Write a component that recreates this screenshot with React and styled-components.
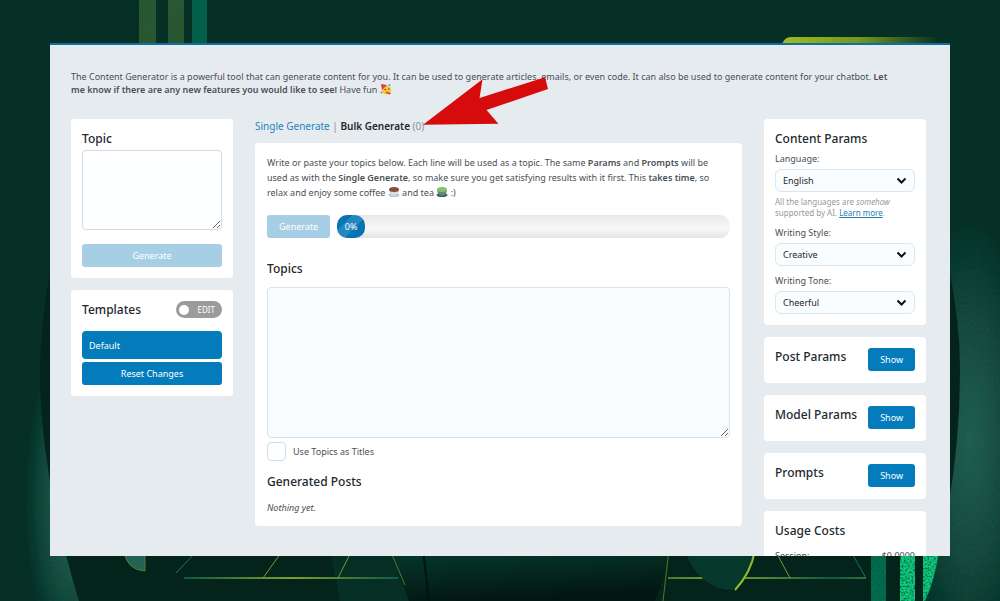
import React, { useState } from 'react'
import styled, { createGlobalStyle } from 'styled-components'

const GlobalStyle = createGlobalStyle`
  * {
    box-sizing: border-box;
  }
  body {
    margin: 0;
    background: #062f26;
    color: #4a4f55;
    font-family: 'Noto Sans', 'Open Sans', sans-serif;
    font-size: 9px;
  }
  button,
  select,
  textarea,
  input {
    font-family: inherit;
    font-size: inherit;
  }
`

//#region  styled components
const StyledPage = styled('div')`
  position: relative;
  height: 100vh;
  padding: 43px 50px 45px;
  overflow: hidden;
`
const StyledBackdrop = styled('svg')`
  position: absolute;
  top: 0;
  left: 0;
  width: 100%;
  height: 100%;
`
const StyledWindow = styled('main')`
  position: relative;
  height: 100%;
  padding: 25px 24px 0 21px;
  overflow: hidden;
  background: #e6ebf0;
  border-top: 2px solid #146d9f;
`
const StyledIntro = styled('p')`
  margin: 0 0 23px;
  padding-right: 30px;
  line-height: 13px;
  b {
    font-weight: 600;
  }
`
const StyledColumns = styled('div')`
  display: grid;
  grid-template-columns: 162px 1fr 162px;
  gap: 22px;
  align-items: start;
`
const StyledColumn = styled('div')`
  display: flex;
  flex-direction: column;
  gap: 12px;
  min-width: 0;
`
const StyledPanel = styled('section')`
  padding: 11px;
  background: #fff;
  border-radius: 4px;
`
const StyledCollapsedPanel = styled(StyledPanel)`
  padding-bottom: 12px;
`
const StyledTitle = styled('h2')`
  display: block;
  margin: 0;
  color: #23282d;
  font-size: 12px;
  font-weight: 500;
  line-height: 18px;
`
const StyledTopicInput = styled('textarea')`
  display: block;
  width: 100%;
  height: 80px;
  margin: 2px 0 14px;
  background: #fdfeff;
  border: 1px solid #d5dde3;
  border-radius: 4px;
`
const StyledButton = styled('button')`
  display: block;
  width: ${props => (props.$wide ? '100%' : 'auto')};
  height: 23px;
  padding: 0 12px;
  background: #047cbc;
  border: 0;
  border-radius: 3px;
  color: #fff;
  :hover {
    cursor: pointer;
  }
  &:disabled {
    background: #a6cfe5;
  }
`
const StyledHead = styled('div')`
  display: flex;
  justify-content: space-between;
  align-items: flex-start;
`
const StyledSwitch = styled('label')`
  display: flex;
  align-items: center;
  justify-content: space-between;
  width: 46px;
  height: 17px;
  padding: 0 7px 0 3px;
  background: #9b9b9b;
  border-radius: 9px;
  color: #fff;
  font-size: 8px;
  input {
    appearance: none;
    width: 10px;
    height: 10px;
    margin: 0;
    background: #fff;
    border-radius: 50%;
  }
`
const StyledTemplate = styled('button')`
  display: block;
  width: 100%;
  height: 28px;
  margin: 12px 0 3px;
  padding: 0 7px;
  background: #047cbc;
  border: 0;
  border-radius: 4px;
  color: #fff;
  text-align: left;
`
const StyledModes = styled('nav')`
  height: 12px;
  font-size: 10px;
  line-height: 14px;
  color: #8d9297;
  a {
    color: #2583bf;
    text-decoration: none;
  }
  b {
    color: #23282d;
    font-weight: 600;
  }
`
const StyledMainPanel = styled(StyledPanel)`
  padding: 12px 12px 11px;
`
const StyledHelp = styled('p')`
  margin: 0 0 15px;
  padding-right: 12px;
  line-height: 15px;
  b {
    font-weight: 600;
  }
`
const StyledRunRow = styled('div')`
  display: flex;
  gap: 7px;
  margin-bottom: 22px;
`
const StyledTrack = styled('div')`
  flex: 1;
  height: 23px;
  background: linear-gradient(#e9e9e9, #f7f7f7 60%, #e4e4e4);
  border-radius: 10px;
`
const StyledProgress = styled('div')`
  width: 28px;
  height: 23px;
  background: linear-gradient(135deg, #0674b0 30%, #2488c0 30%, #2488c0 60%, #0674b0 60%);
  border-radius: 10px;
  color: #fff;
  line-height: 23px;
  text-align: center;
`
const StyledTopics = styled('textarea')`
  display: block;
  width: 100%;
  height: 151px;
  margin: 9px 0 4px;
  background: #f9fcff;
  border: 1px solid #d3e5ee;
  border-radius: 4px;
`
const StyledCheck = styled('label')`
  display: flex;
  align-items: center;
  gap: 7px;
  margin-bottom: 12px;
  input {
    appearance: none;
    width: 19px;
    height: 19px;
    margin: 0;
    background: #fff;
    border: 1px solid #c9dfeb;
    border-radius: 4px;
  }
`
const StyledEmpty = styled('p')`
  margin: 10px 0 0;
  font-style: italic;
  line-height: 14px;
`
const StyledField = styled('div')`
  margin-top: 7px;
  h2 + & {
    margin-top: 3px;
  }
  label {
    display: block;
    margin-bottom: 3px;
    line-height: 15px;
  }
`
const StyledSelectWrapper = styled('div')`
  position: relative;
  svg {
    position: absolute;
    top: 8px;
    right: 8px;
    pointer-events: none;
  }
`
const StyledSelect = styled('select')`
  appearance: none;
  display: block;
  width: 100%;
  height: 23px;
  padding: 0 7px;
  background: #f9fdff;
  border: 1px solid #d6e8f0;
  border-radius: 6px;
  color: #23282d;
`
const StyledHint = styled('p')`
  margin: 4px 0 0;
  padding-right: 12px;
  color: #999;
  font-size: 8px;
  line-height: 11px;
  a {
    color: #2b7cb3;
  }
`
const StyledCost = styled('div')`
  display: flex;
  justify-content: space-between;
  margin-top: 8px;
  line-height: 15px;
`
const StyledEmoji = styled('svg')`
  width: 12px;
  height: 12px;
  vertical-align: -2px;
`
const StyledArrow = styled('svg')`
  position: absolute;
  top: 32px;
  left: 373px;
  width: 125px;
  height: 50px;
  pointer-events: none;
`
//#endregion

const Backdrop = () => (
  <StyledBackdrop viewBox="0 0 1000 601" preserveAspectRatio="none" aria-hidden="true">
    <defs>
      <filter id="grain" x="0" y="0" width="100%" height="100%">
        <feTurbulence type="fractalNoise" baseFrequency="0.5" numOctaves="2" seed="4" />
        <feColorMatrix values="0 0 0 0 0  0 0 0 0 0.12  0 0 0 0 0.09  0 3 0 0 -1.25" />
        <feComposite in2="SourceGraphic" operator="in" result="dots" />
        <feMerge>
          <feMergeNode in="SourceGraphic" />
          <feMergeNode in="dots" />
        </feMerge>
      </filter>
      <radialGradient id="sideLeft" gradientUnits="userSpaceOnUse" cx="75" cy="500" r="170" gradientTransform="translate(52 0) scale(0.3 1)">
        <stop offset="0" stopColor="#2d6a58" />
        <stop offset="1" stopColor="#2d6a58" stopOpacity="0" />
      </radialGradient>
      <radialGradient id="sideRight" gradientUnits="userSpaceOnUse" cx="970" cy="440" r="230" gradientTransform="translate(679 0) scale(0.3 1)">
        <stop offset="0" stopColor="#2a5d4e" />
        <stop offset="1" stopColor="#2a5d4e" stopOpacity="0" />
      </radialGradient>
      <linearGradient id="lime">
        <stop offset="0" stopColor="#9fbd1f" />
        <stop offset="0.5" stopColor="#6f961f" />
        <stop offset="1" stopColor="#062f26" />
      </linearGradient>
      <linearGradient id="body" x1="0" y1="0" x2="0.3" y2="1">
        <stop offset="0" stopColor="#063a2c" />
        <stop offset="1" stopColor="#021712" />
      </linearGradient>
      <linearGradient id="line" gradientUnits="userSpaceOnUse" x1="184" x2="400" y1="0" y2="0" spreadMethod="repeat">
        <stop offset="0" stopColor="#0f5a43" />
        <stop offset="0.5" stopColor="#7f9f2a" />
        <stop offset="1" stopColor="#0f5a43" />
      </linearGradient>
    </defs>
    <rect width="1000" height="601" fill="#062f26" />
    <g filter="url(#grain)">
      <rect x="139" width="17" height="50" fill="#35521d" />
      <rect x="168" width="16" height="50" fill="#35521d" />
      <rect x="192" width="15" height="50" fill="#0b5e45" />
      <rect y="280" width="140" height="321" fill="url(#sideLeft)" />
      <rect x="880" y="200" width="120" height="401" fill="url(#sideRight)" />
    </g>
    <path d="M782 45 Q784 37 791 37 H940 V45 Z" fill="url(#lime)" />
    <path d="M50 270 Q40 330 40 380 Q42 480 79 601 H925 Q960 490 960 370 Q960 320 948 264 Z" fill="#03231b" />
    <path d="M330 550 H404 L410 601 H340 Z" fill="#052e24" />
    <path d="M390 550 L409 601 H655 Q665 580 668 550 Z" fill="url(#body)" />
    <path d="M423 550 L429 601" stroke="#01140f" strokeWidth="2" />
    <path d="M124 550 Q126 570 145 571 V550 Z" fill="#246352" stroke="#52783a" />
    <g fill="none" stroke="#14795a">
      <path d="M184 578 H398 M668 578 H866" stroke="url(#line)" strokeWidth="2" />
      <path d="M198 550 L176 573 M850 550 L866 578" />
      <path d="M283 550 L263 578 M352 550 L338 578 M776 552 L790 578" stroke="#759b32" />
      <path d="M390 550 L405 585 M669 550 L663 601" stroke="#55762b" />
    </g>
    <path d="M684 550 Q700 590 733 590 Q751 576 756 550 Z" fill="#07382c" />
    <path d="M735 590 Q751 573 755 550" fill="none" stroke="#94bb2b" strokeWidth="2" />
    <g filter="url(#grain)">
      <path d="M871 550 H886 V601 H871 Z" fill="#0a6c48" />
      <path d="M900 550 H915 V601 H900 Z M923 550 H939 Q935 580 925 601 H923 Z" fill="#12c877" />
    </g>
  </StyledBackdrop>
)

const PartyFace = () => (
  <StyledEmoji viewBox="0 0 24 24" role="img" aria-label="party face">
    <circle cx="13" cy="14" r="9" fill="#fcc531" />
    <path d="M2 2 L14 4 L4 14 Z" fill="#dd3d4c" />
    <path d="M9 13 h3 M16 12 h3" stroke="#5b3b1a" strokeWidth="2" />
    <path d="M12 17 L22 20 L20 23 L12 20 Z" fill="#d5452f" />
    <circle cx="19" cy="4" r="2" fill="#45a3dc" />
    <circle cx="3" cy="19" r="2" fill="#65b247" />
  </StyledEmoji>
)

const Cup = ({ drink, bowl, rim, label }) => (
  <StyledEmoji viewBox="0 0 24 24" role="img" aria-label={label}>
    <ellipse cx="12" cy="18" rx="11" ry="4" fill={bowl} />
    <path d="M2 7 H22 Q21 20 12 20 Q3 20 2 7 Z" fill={rim} />
    <ellipse cx="12" cy="7" rx="10" ry="5" fill={drink} />
  </StyledEmoji>
)

const SelectField = ({ id, label, options, children }) => (
  <StyledField>
    <label htmlFor={id}>{label}:</label>
    <StyledSelectWrapper>
      <StyledSelect id={id}>
        {options.map(option => (
          <option key={option}>{option}</option>
        ))}
      </StyledSelect>
      <svg width="11" height="8" viewBox="0 0 11 8" fill="none">
        <path d="M1.500 1.500 L5.500 5.500 L9.500 1.500" stroke="#111" strokeWidth="2" />
      </svg>
    </StyledSelectWrapper>
    {children}
  </StyledField>
)

const CollapsedPanel = ({ title }) => (
  <StyledCollapsedPanel>
    <StyledHead>
      <StyledTitle>{title}</StyledTitle>
      <StyledButton>Show</StyledButton>
    </StyledHead>
  </StyledCollapsedPanel>
)

const App = () => {
  const [topics, setTopics] = useState('')
  const [progress] = useState(0)
  return (
    <StyledPage>
      <GlobalStyle />
      <Backdrop />
      <StyledWindow>
        <StyledIntro>
          The Content Generator is a powerful tool that can generate content for you. It can be used
          to generate articles, emails, or even code. It can also be used to generate content for
          your chatbot. <b>Let me know if there are any new features you would like to see!</b> Have
          fun <PartyFace />
        </StyledIntro>
        <StyledColumns>
          <StyledColumn>
            <StyledPanel>
              <StyledTitle as="label" htmlFor="topic">
                Topic
              </StyledTitle>
              <StyledTopicInput id="topic" />
              <StyledButton $wide disabled>
                Generate
              </StyledButton>
            </StyledPanel>
            <StyledPanel>
              <StyledHead>
                <StyledTitle>Templates</StyledTitle>
                <StyledSwitch>
                  <input type="checkbox" />
                  EDIT
                </StyledSwitch>
              </StyledHead>
              <StyledTemplate>Default</StyledTemplate>
              <StyledButton $wide>Reset Changes</StyledButton>
            </StyledPanel>
          </StyledColumn>
          <StyledColumn>
            <StyledModes>
              <a href="#single">Single Generate</a> | <b>Bulk Generate</b> (0)
            </StyledModes>
            <StyledMainPanel>
              <StyledHelp>
                Write or paste your topics below. Each line will be used as a topic. The same{' '}
                <b>Params</b> and <b>Prompts</b> will be used as with the <b>Single Generate</b>, so
                make sure you get satisfying results with it first. This <b>takes time</b>, so relax
                and enjoy some coffee{' '}
                <Cup drink="#8b4a3c" bowl="#b9c4c9" rim="#d5dde0" label="coffee" /> and tea{' '}
                <Cup drink="#86c06a" bowl="#3f5650" rim="#5f8a74" label="tea" /> :)
              </StyledHelp>
              <StyledRunRow>
                <StyledButton disabled>Generate</StyledButton>
                <StyledTrack>
                  <StyledProgress>{progress}%</StyledProgress>
                </StyledTrack>
              </StyledRunRow>
              <StyledTitle as="label" htmlFor="topics">
                Topics
              </StyledTitle>
              <StyledTopics
                id="topics"
                value={topics}
                onChange={e => {
                  setTopics(e.target.value)
                }}
              />
              <StyledCheck>
                <input type="checkbox" />
                Use Topics as Titles
              </StyledCheck>
              <StyledTitle>Generated Posts</StyledTitle>
              <StyledEmpty>Nothing yet.</StyledEmpty>
            </StyledMainPanel>
          </StyledColumn>
          <StyledColumn>
            <StyledPanel>
              <StyledTitle>Content Params</StyledTitle>
              <SelectField id="language" label="Language" options={['English', 'French']}>
                <StyledHint>
                  All the languages are <i>somehow</i> supported by AI.{' '}
                  <a href="#languages">Learn more</a>.
                </StyledHint>
              </SelectField>
              <SelectField id="style" label="Writing Style" options={['Creative', 'Formal']} />
              <SelectField id="tone" label="Writing Tone" options={['Cheerful', 'Neutral']} />
            </StyledPanel>
            <CollapsedPanel title="Post Params" />
            <CollapsedPanel title="Model Params" />
            <CollapsedPanel title="Prompts" />
            <StyledPanel>
              <StyledTitle>Usage Costs</StyledTitle>
              <StyledCost>
                <span>Session:</span>
                <span>$0.0000</span>
              </StyledCost>
            </StyledPanel>
          </StyledColumn>
        </StyledColumns>
        <StyledArrow viewBox="0 0 126 50">
          <path
            d="M0 48 L60 2 L57 21 L123 0 L126 12 L64 33 L76 47 Z"
            fill="#d60b0b"
          />
        </StyledArrow>
      </StyledWindow>
    </StyledPage>
  )
}

export default App
